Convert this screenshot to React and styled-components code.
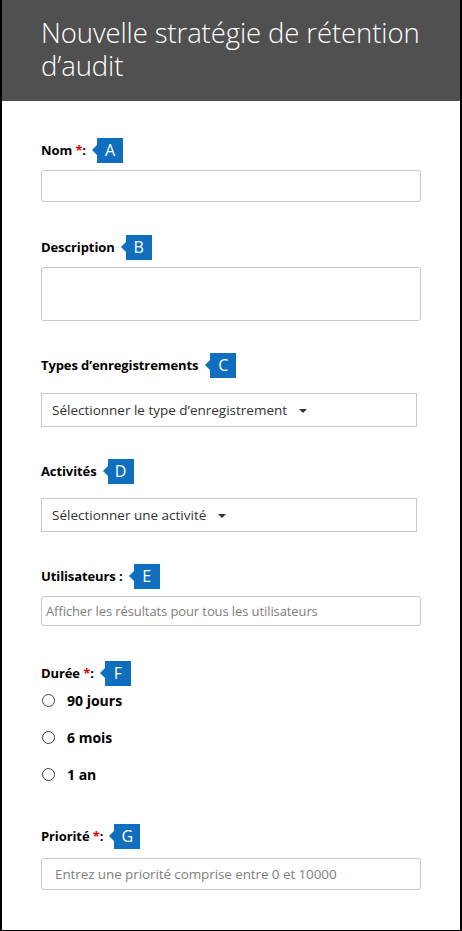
import styled, { createGlobalStyle } from "styled-components";

const GlobalStyle = createGlobalStyle`
    html, body {
        margin: 0;
        padding: 0;
        background: #fff;
    }
    body {
        font-family: "Open Sans", "Noto Sans", sans-serif;
    }
`;

const Panel = styled.div`
    width: 462px;
    height: 931px;
    box-sizing: border-box;
    border: 2px solid #000;
    border-top: none;
    border-bottom-width: 1px;
    background: #fff;
    overflow: hidden;
`;

const Header = styled.header`
    background: #505050;
    color: #fff;
    height: 101px;
    box-sizing: border-box;
    padding: 16px 20px 0 39px;
`;

const Title = styled.h1`
    margin: 0;
    font-family: "Open Sans", sans-serif;
    font-weight: 300;
    font-size: 27.5px;
    line-height: 33px;
    letter-spacing: -0.1px;
`;

const Form = styled.form`
    padding: 0 39px 0 39px;
    display: flex;
    flex-direction: column;
`;

const LabelRow = styled.div`
    display: flex;
    align-items: center;
    gap: 6px;
    height: 26px;
    margin-top: ${(p) => p.$top}px;
    margin-bottom: ${(p) => p.$bottom}px;
`;

const Label = styled.label`
    font-family: "Open Sans", sans-serif;
    font-weight: 700;
    font-size: 13px;
    color: #000;
    letter-spacing: -0.1px;
`;

const Star = styled.span`
    color: #d00;
`;

const Badge = styled.span`
    position: relative;
    flex: none;
    display: inline-flex;
    align-items: center;
    justify-content: center;
    width: 26px;
    height: 25px;
    margin-left: ${(p) => p.$gap || 5}px;
    background: #106ebe;
    color: #fff;
    font-family: "Open Sans", sans-serif;
    font-size: 16px;
    font-weight: 500;

    &::before {
        content: "";
        position: absolute;
        left: -5px;
        top: 50%;
        margin-top: -5px;
        border-top: 5px solid transparent;
        border-bottom: 5px solid transparent;
        border-right: 5px solid #106ebe;
    }
`;

const TextInput = styled.div`
    width: 380px;
    height: ${(p) => p.$h || 32}px;
    box-sizing: border-box;
    border: 1px solid #c8c8c8;
    border-radius: 3px;
    display: flex;
    align-items: center;
    padding-left: ${(p) => p.$pad || 4}px;
    font-size: ${(p) => p.$size || 13}px;
    color: #808080;
    letter-spacing: -0.1px;
`;

const Select = styled.div`
    width: 376px;
    height: 34px;
    box-sizing: border-box;
    border: 1px solid #c8c8c8;
    display: flex;
    align-items: center;
    gap: 12px;
    padding-left: 10px;
    font-size: 13.5px;
    color: #333;
`;

const Caret = styled.span`
    width: 0;
    height: 0;
    border-left: 4px solid transparent;
    border-right: 4px solid transparent;
    border-top: 4px solid #333;
    margin-top: 2px;
`;

const RadioList = styled.div`
    display: flex;
    flex-direction: column;
    gap: 15px;
    margin-top: 3px;
`;

const RadioRow = styled.div`
    display: flex;
    align-items: center;
    gap: 12px;
    height: 22px;
    font-size: 14px;
    font-weight: 700;
    color: #000;
`;

const RadioCircle = styled.span`
    width: 11px;
    height: 11px;
    border: 1px solid #444;
    border-radius: 50%;
    margin-left: 1px;
`;

function App() {
    return (
        <>
            <GlobalStyle />
            <Panel>
                <Header>
                    <Title>Nouvelle stratégie de rétention d’audit</Title>
                </Header>
                <Form>
                    <LabelRow $top={36} $bottom={7}>
                        <Label>
                            Nom <Star>*</Star>:
                        </Label>
                        <Badge>A</Badge>
                    </LabelRow>
                    <TextInput />

                    <LabelRow $top={32} $bottom={7}>
                        <Label>Description</Label>
                        <Badge $gap={0}>B</Badge>
                    </LabelRow>
                    <TextInput $h={54} />

                    <LabelRow $top={31} $bottom={15}>
                        <Label>Types d’enregistrements</Label>
                        <Badge $gap={6}>C</Badge>
                    </LabelRow>
                    <Select>
                        Sélectionner le type d’enregistrement <Caret />
                    </Select>

                    <LabelRow $top={31} $bottom={14}>
                        <Label>Activités</Label>
                        <Badge $gap={0}>D</Badge>
                    </LabelRow>
                    <Select>
                        Sélectionner une activité <Caret />
                    </Select>

                    <LabelRow $top={31} $bottom={7}>
                        <Label>Utilisateurs :</Label>
                        <Badge>E</Badge>
                    </LabelRow>
                    <TextInput $h={30} $size={13}>
                        Afficher les résultats pour tous les utilisateurs
                    </TextInput>

                    <LabelRow $top={34} $bottom={0}>
                        <Label>
                            Durée <Star>*</Star>:
                        </Label>
                        <Badge>F</Badge>
                    </LabelRow>
                    <RadioList>
                        <RadioRow>
                            <RadioCircle />
                            90 jours
                        </RadioRow>
                        <RadioRow>
                            <RadioCircle />
                            6 mois
                        </RadioRow>
                        <RadioRow>
                            <RadioCircle />
                            1 an
                        </RadioRow>
                    </RadioList>

                    <LabelRow $top={38} $bottom={9}>
                        <Label>
                            Priorité <Star>*</Star>:
                        </Label>
                        <Badge>G</Badge>
                    </LabelRow>
                    <TextInput $pad={13} $size={13.5}>
                        Entrez une priorité comprise entre 0 et 10000
                    </TextInput>
                </Form>
            </Panel>
        </>
    );
}

export default App;
